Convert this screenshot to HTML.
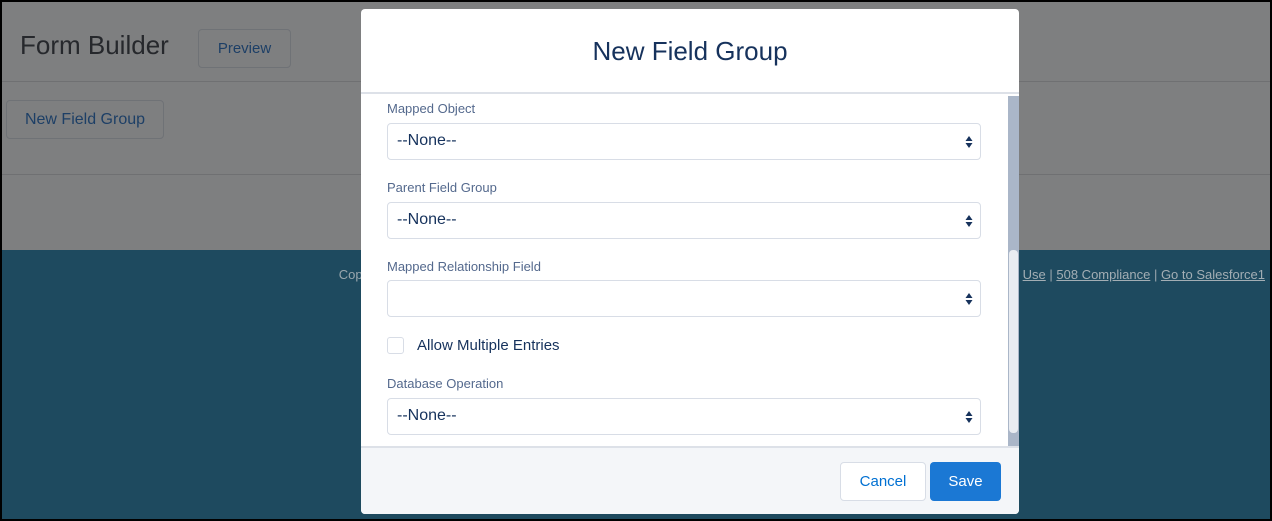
<!DOCTYPE html>
<html><head><style>
*{box-sizing:border-box;margin:0;padding:0}
body{width:1272px;height:521px;background:#000;font-family:"Liberation Sans",sans-serif;position:relative;overflow:hidden}
#frame{position:absolute;left:2px;top:2px;width:1268px;height:517px;background:#7e7f80;overflow:hidden}
.hl{position:absolute;left:0;width:1268px;height:1px;background:#6f7072}
.btn{position:absolute;border:1px solid #6f7276;border-radius:4px;color:#1d3f66;font-size:15px;display:flex;align-items:center;justify-content:center}
#footer{position:absolute;left:0;top:248px;width:1268px;height:269px;background:#1e4a5f}
#links{position:absolute;top:265px;right:5px;color:#9aa7ae;font-size:13px}
#links u{color:#a3aeb4}
#modal{position:absolute;left:361px;top:9px;width:658px;height:505px;background:#fff;border-radius:4px;overflow:hidden}
#mh{height:85px;border-bottom:2px solid #dde1e8;text-align:center;font-size:26px;color:#16325c;padding-top:27px}
.lbl{position:absolute;left:26px;font-size:13px;color:#54698d}
.sel{position:absolute;left:26px;width:594px;height:37px;border:1px solid #d8dde6;border-radius:4px;font-size:16px;color:#16325c;padding:8px 0 0 9px}
.arr{position:absolute;right:7px;top:11px;width:8px;height:14px}
#sb{position:absolute;left:647px;top:87px;width:11px;height:351px;background:#aab6c8}
#thumb{position:absolute;left:648px;top:241px;width:9px;height:183px;background:#e9ecf1;border-radius:4px}
#mf{position:absolute;left:0;top:437px;width:658px;height:68px;background:#f4f6f9;border-top:2px solid #dde1e8}
</style></head><body>
<div id="frame">
<div style="position:absolute;left:18px;top:28px;font-size:26px;color:#26282c">Form Builder</div>
<div class="btn" style="left:196px;top:27px;width:93px;height:39px">Preview</div>
<div class="hl" style="top:79px"></div>
<div class="btn" style="left:4px;top:98px;width:158px;height:39px;font-size:16px">New Field Group</div>
<div class="hl" style="top:172px"></div>
<div id="footer"></div>
<div id="links">Cop<span style="display:inline-block;width:660px"></span><u>Use</u> | <u>508 Compliance</u> | <u>Go to Salesforce1</u></div>
</div>
<div id="modal">
<div id="mh">New Field Group</div>
<div class="lbl" style="top:92px">Mapped Object</div>
<div class="sel" style="top:114px">--None--<svg class="arr" viewBox="0 0 8 14"><path d="M4 1L7.5 6H0.5Z M4 13L7.5 8H0.5Z" fill="#16325c"/></svg></div>
<div class="lbl" style="top:171px">Parent Field Group</div>
<div class="sel" style="top:193px">--None--<svg class="arr" viewBox="0 0 8 14"><path d="M4 1L7.5 6H0.5Z M4 13L7.5 8H0.5Z" fill="#16325c"/></svg></div>
<div class="lbl" style="top:250px">Mapped Relationship Field</div>
<div class="sel" style="top:271px"><svg class="arr" viewBox="0 0 8 14"><path d="M4 1L7.5 6H0.5Z M4 13L7.5 8H0.5Z" fill="#16325c"/></svg></div>
<div style="position:absolute;left:26px;top:328px;width:17px;height:17px;border:1px solid #d8dde6;border-radius:3px"></div>
<div style="position:absolute;left:56px;top:328px;font-size:15px;color:#16325c">Allow Multiple Entries</div>
<div class="lbl" style="top:367px">Database Operation</div>
<div class="sel" style="top:389px">--None--<svg class="arr" viewBox="0 0 8 14"><path d="M4 1L7.5 6H0.5Z M4 13L7.5 8H0.5Z" fill="#16325c"/></svg></div>
<div id="sb"></div><div id="thumb"></div>
<div id="mf">
<div style="position:absolute;left:479px;top:14px;width:86px;height:39px;border:1px solid #d8dde6;border-radius:4px;background:#fff;color:#0070d2;font-size:15px;text-align:center;line-height:37px">Cancel</div>
<div style="position:absolute;left:569px;top:14px;width:71px;height:39px;border-radius:4px;background:#1b78d4;color:#fff;font-size:15px;text-align:center;line-height:39px">Save</div>
</div>
</div>
</body></html>
